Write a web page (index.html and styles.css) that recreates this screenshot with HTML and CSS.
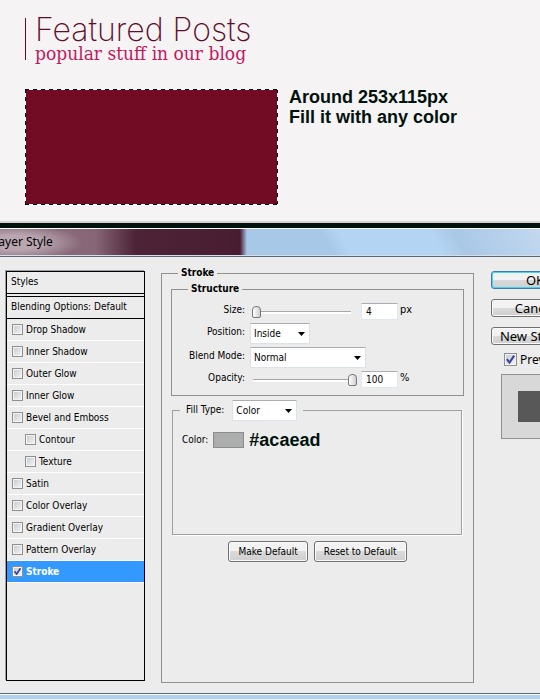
FILE: index.html
```
<!DOCTYPE html>
<html lang="en">
<head>
  <meta charset="UTF-8">
  <meta name="viewport" content="width=device-width, initial-scale=1.0">
  <title>Featured Posts - Layer Style</title>
  <link rel="stylesheet" href="styles.css">
</head>
<body>
  <section class="canvas">
    <header class="heading">
      <h1>Featured Posts</h1>
      <p>popular stuff in our blog</p>
    </header>
    <div class="selection-row">
      <div class="selection"></div>
      <p class="note">Around 253x115px<br>Fill it with any color</p>
    </div>
  </section>

  <section class="dialog">
    <h2 class="title-bar">Layer Style</h2>
    <form class="dialog-body">
      <div class="styles-list">
        <div class="styles-head">Styles</div>
        <div class="styles-blending">Blending Options: Default</div>
        <label class="style-row"><input type="checkbox">Drop Shadow</label>
        <label class="style-row"><input type="checkbox">Inner Shadow</label>
        <label class="style-row"><input type="checkbox">Outer Glow</label>
        <label class="style-row"><input type="checkbox">Inner Glow</label>
        <label class="style-row"><input type="checkbox">Bevel and Emboss</label>
        <label class="style-row nested"><input type="checkbox">Contour</label>
        <label class="style-row nested"><input type="checkbox">Texture</label>
        <label class="style-row"><input type="checkbox">Satin</label>
        <label class="style-row"><input type="checkbox">Color Overlay</label>
        <label class="style-row"><input type="checkbox">Gradient Overlay</label>
        <label class="style-row"><input type="checkbox">Pattern Overlay</label>
        <label class="style-row active"><input type="checkbox" checked>Stroke</label>
      </div>

      <fieldset class="settings">
        <legend>Stroke</legend>
        <fieldset class="structure">
          <legend>Structure</legend>
          <div class="fields">
            <label for="size">Size:</label>
            <div class="field">
              <input class="slider" type="range" min="0" max="100" value="0" aria-label="Size slider">
              <input class="number" id="size" type="text" value="4">
              <span>px</span>
            </div>
            <label for="position">Position:</label>
            <div class="field">
              <select class="select-small" id="position"><option>Inside</option></select>
            </div>
            <label for="blend">Blend Mode:</label>
            <div class="field">
              <select class="select-wide" id="blend"><option>Normal</option></select>
            </div>
            <label for="opacity">Opacity:</label>
            <div class="field">
              <input class="slider" type="range" min="0" max="100" value="100" aria-label="Opacity slider">
              <input class="number" id="opacity" type="text" value="100">
              <span>%</span>
            </div>
          </div>
        </fieldset>

        <fieldset class="fill">
          <legend>
            <label for="fill-type">Fill Type:</label>
            <select id="fill-type"><option>Color</option></select>
          </legend>
          <div class="color-row">
            <label for="color">Color:</label>
            <button class="swatch" id="color" type="button" aria-label="Color"></button>
            <strong>#acaead</strong>
          </div>
        </fieldset>

        <div class="defaults">
          <button class="btn" type="button">Make Default</button>
          <button class="btn" type="button">Reset to Default</button>
        </div>
      </fieldset>

      <div class="actions">
        <button class="btn primary" type="button">OK</button>
        <button class="btn" type="button">Cancel</button>
        <button class="btn" type="button">New Style...</button>
        <label class="preview-toggle"><input type="checkbox" checked>Preview</label>
        <div class="preview"><div class="preview-fill"></div></div>
      </div>
    </form>
  </section>
</body>
</html>
```

FILE: styles.css
```
* {
  box-sizing: border-box;
}

body {
  display: flex;
  flex-direction: column;
  min-height: 100vh;
  margin: 0;
  padding-bottom: 1px;
  overflow: hidden;
  background: #f5f3f4;
  color: #000;
  font-family: "DejaVu Sans Condensed", "DejaVu Sans", sans-serif;
  font-size: 10px;
  line-height: 12px;
}

h1, h2, p, fieldset, legend {
  margin: 0;
  padding: 0;
}

/* Canvas */
.canvas {
  padding: 18px 25px 16px;
  border-bottom: 2px solid #d5d3d4;
}

.heading {
  height: 42px;
  padding-left: 9px;
  border-left: 1px solid #5f0d2b;
}

.heading h1 {
  color: #5f0d2b;
  font-family: Inter, sans-serif;
  font-size: 32px;
  font-weight: 200;
  line-height: 23px;
}

.heading p {
  color: #c2185b;
  font-family: "DejaVu Serif Condensed", "DejaVu Serif", serif;
  font-size: 19px;
  line-height: 24px;
}

.selection-row {
  display: flex;
  gap: 11px;
  margin-top: 29px;
}

/* marching ants */
.selection {
  width: 253px;
  height: 116px;
  background:
    repeating-linear-gradient(90deg, #000 0 4px, #fff 4px 8px) top / 100% 1px no-repeat,
    repeating-linear-gradient(90deg, #000 0 4px, #fff 4px 8px) bottom / 100% 1px no-repeat,
    repeating-linear-gradient(#000 0 4px, #fff 4px 8px) left / 1px 100% no-repeat,
    repeating-linear-gradient(#000 0 4px, #fff 4px 8px) right / 1px 100% no-repeat,
    #720b24;
}

.note {
  color: #02120d;
  font-family: "Liberation Sans", Arial, sans-serif;
  font-size: 18px;
  font-weight: bold;
  line-height: 20px;
  margin-top: -2px;
}

/* Dialog */
.dialog {
  display: flex;
  flex: 1;
  flex-direction: column;
  width: 110%;
  border-top: 5px solid #02120d;
  border-bottom: 5px solid #b0d2f2;
}

.title-bar {
  height: 29px;
  border-top: 1px solid #fff;
  border-bottom: 1px solid #5a6878;
  box-shadow: inset 0 -1px #d5dfe9;
  background:
    radial-gradient(ellipse 66px 18px at 16px 50%, rgba(255, 255, 255, 0.4) 40%, transparent),
    linear-gradient(90deg, #8c6d7d 0, #876777 95px, #4d2338 135px, #481d32 240px, transparent 247px),
    linear-gradient(60deg, #a8c8e8 290px, #b4d4f3 305px, #b4d4f3 385px, #a9c8e6 405px, #c8dcf2 500px);
  font-family: "Noto Sans", sans-serif;
  font-size: 12px;
  font-weight: normal;
  line-height: 26px;
  text-indent: -8px;
}

.dialog-body {
  display: flex;
  flex: 1;
  padding: 10px 15px 10px 6px;
  border-bottom: 1px solid #5a6b7b;
  box-shadow: 0 1px #fff;
  background: #ececec;
}

input[type="checkbox"] {
  flex: none;
  width: 11px;
  height: 11px;
  margin: 0;
  appearance: none;
  border: 1px solid #8e8f8f;
  box-shadow: inset 0 0 0 1px #f4f4f4;
  background: linear-gradient(135deg, #c4c8ce, #f6f6f6);
}

input[type="checkbox"]:checked {
  background:
    url("data:image/svg+xml,%3Csvg xmlns='http://www.w3.org/2000/svg' viewBox='0 0 9 9'%3E%3Cpath d='M1.5 4.2 3.7 7 7.5 1.3' fill='none' stroke='%2334459b' stroke-width='1.7'/%3E%3C/svg%3E") center / 100% no-repeat,
    linear-gradient(135deg, #c4c8ce, #f6f6f6);
}

/* Styles list */
.styles-list {
  width: 139px;
  margin: 4px 16px 2px 0;
  border: 1px solid #000;
  box-shadow: -1px -1px #a0a0a0;
}

.styles-head {
  height: 25px;
  padding: 4px;
  border-bottom: 4px double #000;
}

.styles-blending {
  height: 22px;
  padding: 4px;
  border-bottom: 1px solid #000;
  white-space: nowrap;
}

.style-row {
  display: flex;
  align-items: center;
  gap: 3px;
  height: 22px;
  padding-left: 5px;
  border-bottom: 1px solid #fff;
}

.style-row.nested {
  padding-left: 18px;
}

.style-row.active {
  background: #3399ff;
  color: #fff;
  font-weight: bold;
}

/* Stroke settings */
fieldset {
  min-width: 0;
  border: 1px solid #919191;
}

legend {
  padding: 0 3px;
  font-weight: bold;
}

.settings {
  flex: 1;
  padding: 4px 9px 0;
}

.settings legend {
  margin-left: 7px;
}

.structure {
  padding: 8px 0 7px;
}

.structure legend {
  margin-left: 16px;
}

.fields {
  display: grid;
  grid-template-columns: 73px 1fr;
  gap: 3px 5px;
}

.fields label {
  align-self: center;
  padding-bottom: 3px;
  text-align: right;
}

.field {
  display: flex;
  align-items: center;
}

.field span {
  margin: -3px 0 0 2px;
  font-size: 11px;
}

.slider {
  width: 105px;
  height: 13px;
  margin: 0 4px 0 2px;
  appearance: none;
  background: linear-gradient(#a8a8a8, #a8a8a8) 1px 6px / 98px 1px no-repeat, linear-gradient(#fff, #fff) 1px 7px / 98px 2px no-repeat;
}

.slider::-webkit-slider-thumb {
  width: 9px;
  height: 12px;
  appearance: none;
  border: 1px solid #777;
  border-radius: 4px 4px 2px 2px;
  background: linear-gradient(90deg, #fff, #d0d0d0);
}

.number {
  width: 37px;
  height: 17px;
  padding: 0 4px;
  border: 1px solid #e2e6ee;
  border-top-color: #abadb3;
  border-radius: 1px;
  font: inherit;
}

select {
  height: 21px;
  padding: 0 3px;
  appearance: none;
  border: 1px solid #dde1ec;
  border-top-color: #abadb3;
  border-radius: 1px;
  background: #fff url("data:image/svg+xml,%3Csvg xmlns='http://www.w3.org/2000/svg' width='7' height='4'%3E%3Cpath d='M0 0h7L3.5 4z'/%3E%3C/svg%3E") right 4px center no-repeat;
  color: #000;
  font: inherit;
}

.select-small {
  width: 60px;
}

.select-wide {
  width: 116px;
}

.fill {
  min-height: 135px;
  margin: 4px 2px 0 1px;
  border-color: #a0a0a0;
  box-shadow: 1px 1px #fff;
}

.fill legend {
  display: flex;
  gap: 8px;
  padding: 0 6px;
  font-weight: normal;
}

.fill legend label {
  padding-top: 4px;
}

.fill select {
  width: 65px;
}

.color-row {
  display: flex;
  align-items: center;
  gap: 5px;
  padding: 9px;
}

.swatch {
  width: 31px;
  height: 16px;
  padding: 0;
  border: 1px solid #8c8c8c;
  background: #acaead;
}

.color-row strong {
  color: #02120d;
  font-family: "Liberation Sans", Arial, sans-serif;
  font-size: 18px;
  line-height: 20px;
}

.defaults {
  display: flex;
  justify-content: center;
  gap: 6px;
  margin-top: 6px;
}

.btn {
  height: 21px;
  padding: 0 9px;
  border: 1px solid #707070;
  border-radius: 3px;
  box-shadow: inset 0 0 0 1px #fafafa;
  background: linear-gradient(#f2f2f2 50%, #dadada 50%, #cfcfcf);
  color: #000;
  font: inherit;
  white-space: nowrap;
}

/* Right column */
.actions {
  display: flex;
  flex-direction: column;
  gap: 10px;
  width: 88px;
  margin: 4px 0 0 17px;
  font-family: "Noto Sans", sans-serif;
  font-size: 12px;
}

.actions .btn {
  height: 18px;
  padding: 0;
  font-size: 13px;
}

.btn.primary {
  border-color: #3c7fb1;
  box-shadow: inset 0 0 0 1px #48d0f5;
}

.preview-toggle {
  display: flex;
  align-items: center;
  gap: 3px;
  margin: -2px 0 -2px 13px;
}

.preview-toggle input[type="checkbox"] {
  width: 13px;
  height: 13px;
}

.preview {
  display: flex;
  align-items: center;
  justify-content: center;
  height: 65px;
  margin-left: 10px;
  border: 1px solid #919191;
  background: #d8d8d8;
}

.preview-fill {
  width: 44px;
  height: 31px;
  background: #585858;
}
```
